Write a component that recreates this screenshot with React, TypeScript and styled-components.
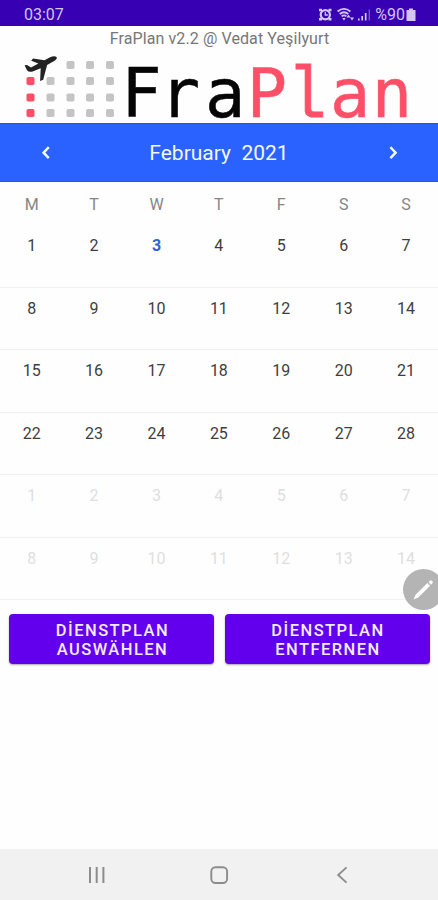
import React from 'react';
import styled, { createGlobalStyle } from 'styled-components';

const GlobalStyle = createGlobalStyle`
  * { box-sizing: border-box; }
  body { margin: 0; background: #fff; font-family: Roboto, "Noto Sans", sans-serif; }
`;

const Screen = styled.div`
  position: relative;
  display: flex;
  flex-direction: column;
  width: 438px;
  height: 900px;
  overflow: hidden;
  background: #fefefe;
`;

const StatusBar = styled.header`
  display: flex;
  align-items: center;
  justify-content: space-between;
  height: 26px;
  flex: none;
  padding: 3px 20px 0 24px;
  background: #3700b3;
  color: #d3c6f0;
  font-size: 16px;
  line-height: 22px;
`;

const StatusIcons = styled.div`
  display: flex;
  align-items: center;
  font-size: 16px;
  svg { display: block; }
`;

const Percent = styled.span`
  margin-left: 3px;
`;

const Credit = styled.div`
  height: 26px;
  flex: none;
  text-align: center;
  color: #777;
  font-size: 16px;
  line-height: 25px;
  letter-spacing: 0.1px;
  padding-left: 1px;
`;

const Brand = styled.div`
  display: flex;
  height: 71px;
  flex: none;
  padding-left: 22px;
`;

const BrandMark = styled.svg`
  display: block;
  flex: none;
  width: 99px;
  height: 71px;
`;

const Wordmark = styled.div`
  display: grid;
  grid-template-columns: repeat(7, 41.7px);
  height: 71px;
`;

const Letter = styled.span<{ $accent: boolean; $slab: boolean; $kern: number }>`
  display: flex;
  justify-content: center;
  height: 71px;
  margin-left: ${(p) => p.$kern}px;
  margin-right: ${(p) => -p.$kern}px;
  font-family: ${(p) => (p.$slab ? '"Liberation Mono"' : '"DejaVu Sans Mono"')}, monospace;
  font-size: ${(p) => (p.$slab ? '72px' : '67px')};
  line-height: ${(p) => (p.$slab ? '92px' : '84px')};
  transform: ${(p) => (p.$slab ? 'scaleX(0.9)' : 'none')};
  color: ${(p) => (p.$accent ? '#fd5068' : '#050505')};
  -webkit-text-stroke: ${(p) => (p.$slab ? '0.8px' : '0.5px')} currentColor;
`;

const MonthBar = styled.div`
  display: flex;
  align-items: center;
  justify-content: space-between;
  height: 59px;
  flex: none;
  padding: 0 34px;
  background: #2962ff;
  border-top: 1px solid #1d58e8;
  border-bottom: 1px solid #1d58e8;
  color: #f4f6ff;
`;

const MonthTitle = styled.h1`
  margin: 0;
  font-size: 21px;
  font-weight: 400;
  line-height: 58px;
  white-space: pre;
`;

const IconButton = styled.button`
  display: flex;
  padding: 0;
  border: 0;
  background: none;
  color: inherit;
`;

const WeekdayRow = styled.div`
  display: grid;
  grid-template-columns: repeat(7, 62.4px);
  height: 43px;
  flex: none;
  padding-left: 0.5px;
  color: #858585;
  font-size: 16px;
  line-height: 45px;
  text-align: center;
`;

const Week = styled.div`
  display: grid;
  grid-template-columns: repeat(7, 62.4px);
  height: 62.5px;
  flex: none;
  padding-left: 0.5px;
  border-bottom: 1px solid #f1f1f1;
`;

const Day = styled.div<{ $tone: 'normal' | 'today' | 'outside' }>`
  text-align: center;
  font-size: 16px;
  line-height: 42px;
  font-weight: ${(p) => (p.$tone === 'today' ? 700 : 400)};
  color: ${(p) => ({ normal: '#3e3e3e', today: '#2f62e0', outside: '#dedede' })[p.$tone]};
`;

const Actions = styled.div`
  display: grid;
  grid-template-columns: 205px 205px;
  gap: 10.5px;
  padding: 14px 0 0 9px;
`;

const ActionButton = styled.button`
  height: 50px;
  padding: 2px 0 0 2px;
  border: 0;
  border-radius: 4px;
  background: #6200ee;
  box-shadow: 0 1px 2px rgba(0, 0, 0, 0.35);
  color: #f3eafe;
  font: 500 16.5px/19px Roboto, sans-serif;
  letter-spacing: 1.45px;
  white-space: pre-line;
`;

const EditBubble = styled.button`
  position: absolute;
  top: 569px;
  left: 403px;
  width: 41px;
  height: 41px;
  padding: 0;
  border: 0;
  border-radius: 50%;
  background: #b4b4b4;
  svg { display: block; }
`;

const NavBar = styled.nav`
  display: flex;
  align-items: center;
  justify-content: space-between;
  height: 51px;
  flex: none;
  margin-top: auto;
  padding: 1px 84px 0;
  background: #f1f1f1;
`;

const weekdays = ['M', 'T', 'W', 'T', 'F', 'S', 'S'];
const weeks = Array.from({ length: 6 }, (_, w) =>
  Array.from({ length: 7 }, (_, d) => w * 7 + d + 1),
);

const wordmark = [
  { ch: 'F', kern: -0.5 },
  { ch: 'r', kern: -3.5 },
  { ch: 'a', kern: 0 },
  { ch: 'P', kern: 0 },
  { ch: 'l', kern: -1.5 },
  { ch: 'a', kern: 0 },
  { ch: 'n', kern: 0 },
];

const dotRows = [9, 25, 41.5, 57];
const dotColumns = [4.5, 24.5, 44.5, 64, 84];

function Logo() {
  return (
    <BrandMark viewBox="0 0 99 71">
      {dotRows.map((y, r) =>
        dotColumns.map((x, c) =>
          r === 0 && c < 2 ? null : (
            <rect key={`${r}-${c}`} x={x} y={y} width="8" height="8" rx="1.8" fill={c === 0 ? '#fb4f67' : '#c4c4c4'} />
          ),
        ),
      )}
      <path
        d="M2.6 13.2L5 13.1L9 15.6L16.4 11.6L9.2 8.8L11 6.5L22.4 8.3L28.2 5.2Q32.5 3.2 34.8 5.2Q35.2 7.4 31.7 9.2L25.1 12.9L21.2 27.8L18.1 29L18.7 16.3L10.7 19.4Q6.8 20.4 5 18.2Z"
        fill="#222"
      />
    </BrandMark>
  );
}

function Chevron({ right }: { right?: boolean }) {
  return (
    <svg width="22" height="22" viewBox="0 0 22 22" fill="none" stroke="currentColor" strokeWidth="2.5">
      <path d={right ? 'M8.4 5.2L13.6 10.7L8.4 16.2' : 'M14.8 5.2L9.6 10.7L14.8 16.2'} />
    </svg>
  );
}

export default function App() {
  return (
    <>
      <GlobalStyle />
      <Screen>
        <StatusBar>
          <span>03:07</span>
          <StatusIcons>
            <svg width="54" height="16" viewBox="0 0 54 16" fill="none" stroke="#d3c6f0">
              <g transform="translate(1 0)">
                <path d="M0 1.8h3v2.5H0zM9.5 1.8h3v2.5h-3zM0 11h3v2.5H0zM9.5 11h3v2.5h-3z" fill="#d3c6f0" stroke="none" />
                <circle cx="6.3" cy="7.8" r="4.6" strokeWidth="2.2" />
                <path d="M6.3 5v3h2.5" strokeWidth="1.3" />
                <path d="M18.6 4.5Q25 -.7 31.4 4.5M20.7 7Q25 3.5 29.3 7M22.6 9.4Q25 7.4 27.4 9.4" strokeWidth="1.8" />
                <path d="M23.2 11h3.5L25 13.5zM29.5 7.5l2 3h-4zM33 13.5l2-3h-4z" fill="#d3c6f0" stroke="none" />
                <path d="M39.8 13.5v-2M43.2 13.5V9M46.7 13.5V6" strokeWidth="1.7" />
                <path d="M50.3 13.5V2.5" strokeWidth="1.3" opacity=".45" />
              </g>
            </svg>
            <Percent>%90</Percent>
            <svg width="13" height="16" viewBox="0 0 13 16" fill="#d3c6f0">
              <path d="M4 1.5h4V3h2.5v11h-9V3H4z" />
            </svg>
          </StatusIcons>
        </StatusBar>
        <Credit>FraPlan v2.2 @ Vedat Yeşilyurt</Credit>
        <Brand>
          <Logo />
          <Wordmark>
            {wordmark.map(({ ch, kern }, i) => (
              <Letter key={i} $accent={i > 2} $slab={ch === 'l'} $kern={kern}>{ch}</Letter>
            ))}
          </Wordmark>
        </Brand>
        <MonthBar>
          <IconButton aria-label="Previous month"><Chevron /></IconButton>
          <MonthTitle>{'February  2021'}</MonthTitle>
          <IconButton aria-label="Next month"><Chevron right /></IconButton>
        </MonthBar>
        <WeekdayRow>
          {weekdays.map((d, i) => <span key={i}>{d}</span>)}
        </WeekdayRow>
        {weeks.map((week) => (
          <Week key={week[0]}>
            {week.map((n) => (
              <Day key={n} $tone={n === 3 ? 'today' : n > 28 ? 'outside' : 'normal'}>
                {n > 28 ? n - 28 : n}
              </Day>
            ))}
          </Week>
        ))}
        <Actions>
          <ActionButton>{'DİENSTPLAN\nAUSWÄHLEN'}</ActionButton>
          <ActionButton>{'DİENSTPLAN\nENTFERNEN'}</ActionButton>
        </Actions>
        <EditBubble aria-label="Edit">
          <svg width="41" height="41" viewBox="0 0 41 41" fill="#fff">
            <path d="M10.5 30.5L12.6 25.8L24.4 14L27.2 16.8L15.2 28.4ZM25.5 13L27.3 11.4Q28.3 11 29.2 12Q30.1 13 29.6 14L28.2 15.7Z" />
          </svg>
        </EditBubble>
        <NavBar>
          <svg width="26" height="24" viewBox="0 0 26 24" stroke="#8c8c8c" strokeWidth="2">
            <path d="M6 4v16M12.7 4v16M19.4 4v16" />
          </svg>
          <svg width="24" height="24" viewBox="0 0 24 24" fill="none" stroke="#8c8c8c" strokeWidth="1.9">
            <rect x="3.3" y="4.2" width="15.8" height="15.8" rx="4.2" />
          </svg>
          <svg width="24" height="24" viewBox="0 0 24 24" fill="none" stroke="#8c8c8c" strokeWidth="1.9">
            <path d="M16.5 4.4L8.2 12L16.5 19.6" />
          </svg>
        </NavBar>
      </Screen>
    </>
  );
}
